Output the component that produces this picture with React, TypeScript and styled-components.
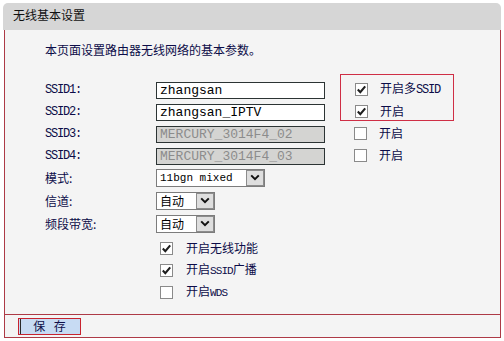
import React from "react";
import styled, { createGlobalStyle } from "styled-components";

const Global = createGlobalStyle`
  html, body { margin: 0; padding: 0; background: #ffffff; }
  body { font-family: "Noto Sans CJK SC", "Noto Sans", sans-serif; }
`;

const TEXT = "#0c0c48";
const FRAME = "#ad3a46";

const Page = styled.div`
  width: 504px;
  height: 341px;
  box-sizing: border-box;
  padding: 3px 3px 0 3px;
`;

const Header = styled.div`
  height: 27px;
  box-sizing: border-box;
  padding: 5px 0 0 10px;
  background: #d6d6d6;
  border-radius: 5px 5px 0 0;
  font-size: 12px;
  line-height: 14px;
  color: #111111;
`;

const Panel = styled.div`
  margin-left: 1px;
  background: #f4f4f4;
  border-left: 1px solid ${FRAME};
  border-right: 1px solid ${FRAME};
  border-bottom: 1px solid ${FRAME};
`;

const Content = styled.div`
  padding: 13px 0 11px 40px;
  color: ${TEXT};
  font-size: 12px;
`;

const Desc = styled.div`
  height: 14px;
  line-height: 14px;
  margin-bottom: 21px;
`;

const Mono = styled.span<{ $size?: number; $track?: number }>`
  font-family: "Liberation Mono", monospace;
  font-size: ${(p) => p.$size ?? 12}px;
  letter-spacing: ${(p) => p.$track ?? -1.2}px;
`;

const SsidGrid = styled.div`
  display: grid;
  grid-template-columns: 111px 184px 114px;
  grid-template-rows: repeat(4, 22px);
  align-items: center;
`;

const Label = styled.div`
  line-height: 14px;
`;

const TextInput = styled.input`
  width: 169px;
  height: 17px;
  box-sizing: border-box;
  margin: 0;
  padding: 0 3px;
  border: 1px solid #2c3434;
  background: #ffffff;
  color: #000;
  font-family: "Liberation Mono", monospace;
  font-size: 13px;
  outline: none;
  &:disabled {
    background: #d4d4d2;
    color: #8c8c8c;
    -webkit-text-fill-color: #8c8c8c;
    opacity: 1;
  }
`;

const MultiBox = styled.div`
  grid-column: 3;
  grid-row: 1 / span 2;
  align-self: start;
  margin-top: -4px;
  height: 47px;
  box-sizing: border-box;
  border: 1px solid #cf2e45;
  padding: 3px 0 0 14px;
`;

const CheckRow = styled.div<{ $pad?: number }>`
  height: 22px;
  display: flex;
  align-items: center;
  gap: ${(p) => (p.$pad === 4 ? 13 : 12)}px;
  padding-left: ${(p) => p.$pad ?? 14}px;
  line-height: 14px;
`;

const Box = styled.span`
  width: 13px;
  height: 13px;
  box-sizing: border-box;
  border: 1px solid #8a8a8a;
  background: #ffffff;
  display: flex;
  align-items: center;
  justify-content: center;
  flex: none;
`;

const SelectGrid = styled.div`
  display: grid;
  grid-template-columns: 111px auto;
  grid-template-rows: repeat(3, 23px);
  align-items: center;
  justify-items: start;
`;

const SelectBox = styled.div<{ $w: number }>`
  width: ${(p) => p.$w}px;
  height: 18px;
  box-sizing: border-box;
  border: 1px solid #7c7c7c;
  background: #ffffff;
  display: flex;
  align-items: stretch;
  color: #000;
`;

const SelectText = styled.span`
  flex: 1;
  padding-left: 3px;
  display: flex;
  align-items: center;
  font-size: 12px;
`;

const ArrowBtn = styled.span`
  width: 18px;
  box-sizing: border-box;
  border: 1px solid #8c8c8c;
  background: #dedede;
  display: flex;
  align-items: center;
  justify-content: center;
`;

const OptionList = styled.div`
  margin-top: 2px;
  padding-left: 111px;
`;

const Footer = styled.div`
  border-top: 1px solid ${FRAME};
  height: 22px;
  padding-left: 13px;
  display: flex;
  align-items: center;
`;

const SaveButton = styled.button`
  width: 63px;
  height: 17px;
  margin: 0;
  padding: 0;
  box-sizing: border-box;
  border: 1px solid #c8232f;
  background: #c7dbf3;
  box-shadow: inset 1px 0 0 #c7dbf3, inset 2px 0 0 #2a2a2a;
  font-family: "Noto Sans CJK SC", sans-serif;
  font-size: 12px;
  line-height: 14px;
  color: #10104a;
  word-spacing: 6px;
`;

const Check = ({ on }: { on: boolean }) => (
  <Box>
    {on && (
      <svg width="11" height="11" viewBox="0 0 11 11">
        <path d="M1.8 5.6 L4.3 8.2 L9.2 2.4" fill="none" stroke="#1e1e1e" strokeWidth="2.1" />
      </svg>
    )}
  </Box>
);

const Chevron = () => (
  <svg width="10" height="7" viewBox="0 0 10 7">
    <path d="M1.2 1.4 L5 5.2 L8.8 1.4" fill="none" stroke="#111" strokeWidth="2" />
  </svg>
);

const Select = ({ w, children }: { w: number; children: React.ReactNode }) => (
  <SelectBox $w={w}>
    <SelectText>{children}</SelectText>
    <ArrowBtn>
      <Chevron />
    </ArrowBtn>
  </SelectBox>
);

export default function App() {
  return (
    <>
      <Global />
      <Page>
        <Header>无线基本设置</Header>
        <Panel>
          <Content>
            <Desc>本页面设置路由器无线网络的基本参数。</Desc>
            <SsidGrid>
              <Label><Mono>SSID1:</Mono></Label>
              <div><TextInput defaultValue="zhangsan" /></div>
              <MultiBox>
                <CheckRow $pad={0}>
                  <Check on />
                  <span>开启多<Mono>SSID</Mono></span>
                </CheckRow>
                <CheckRow $pad={0}>
                  <Check on />
                  <span>开启</span>
                </CheckRow>
              </MultiBox>
              <Label><Mono>SSID2:</Mono></Label>
              <div><TextInput defaultValue="zhangsan_IPTV" /></div>
              <Label><Mono>SSID3:</Mono></Label>
              <div><TextInput defaultValue="MERCURY_3014F4_02" disabled /></div>
              <CheckRow>
                <Check on={false} />
                <span>开启</span>
              </CheckRow>
              <Label><Mono>SSID4:</Mono></Label>
              <div><TextInput defaultValue="MERCURY_3014F4_03" disabled /></div>
              <CheckRow>
                <Check on={false} />
                <span>开启</span>
              </CheckRow>
            </SsidGrid>
            <SelectGrid>
              <Label>模式:</Label>
              <Select w={109}><Mono $size={11} $track={0}>11bgn mixed</Mono></Select>
              <Label>信道:</Label>
              <Select w={59}>自动</Select>
              <Label>频段带宽:</Label>
              <Select w={59}>自动</Select>
            </SelectGrid>
            <OptionList>
              <CheckRow $pad={4}>
                <Check on />
                <span>开启无线功能</span>
              </CheckRow>
              <CheckRow $pad={4}>
                <Check on />
                <span>开启<Mono $size={11} $track={-0.9}>SSID</Mono>广播</span>
              </CheckRow>
              <CheckRow $pad={4}>
                <Check on={false} />
                <span>开启<Mono $size={11} $track={-0.9}>WDS</Mono></span>
              </CheckRow>
            </OptionList>
          </Content>
          <Footer>
            <SaveButton>保 存</SaveButton>
          </Footer>
        </Panel>
      </Page>
    </>
  );
}
